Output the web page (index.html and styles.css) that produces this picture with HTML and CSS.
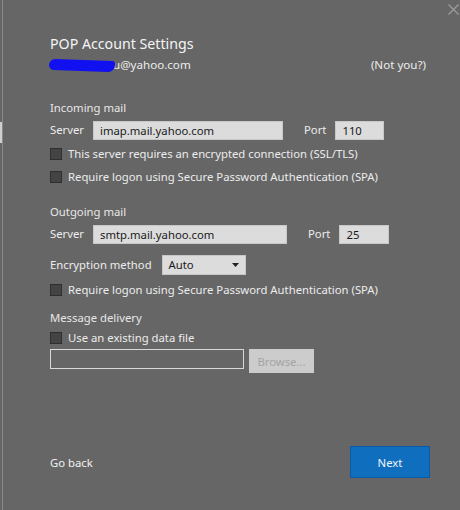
FILE: index.html
```html
<!DOCTYPE html>
<html>
<head>
<meta charset="utf-8">
<link rel="stylesheet" href="styles.css">
</head>
<body>
<div class="edge"></div>
<div class="thumb"></div>
<div class="close">
  <svg width="11" height="11" viewBox="0 0 11 11"><path d="M0.5 0.5 L10.5 10.5 M10.5 0.5 L0.5 10.5" stroke="#9a9a9a" stroke-width="1.4"/></svg>
</div>
<div class="dialog">
  <div class="title">POP Account Settings</div>
  <div class="account">
    <span class="email"><span class="scribble"></span>u@yahoo.com</span>
    <span class="notyou">(Not you?)</span>
  </div>

  <div class="section first">Incoming mail</div>
  <div class="row server">
    <span class="lbl">Server</span>
    <span class="field in-server">imap.mail.yahoo.com</span>
    <span class="lbl port-lbl">Port</span>
    <span class="field in-port">110</span>
  </div>
  <div class="check c1"><span class="box"></span>This server requires an encrypted connection (SSL/TLS)</div>
  <div class="check c2"><span class="box"></span>Require logon using Secure Password Authentication (SPA)</div>

  <div class="section out">Outgoing mail</div>
  <div class="row server">
    <span class="lbl">Server</span>
    <span class="field out-server">smtp.mail.yahoo.com</span>
    <span class="lbl port-lbl2">Port</span>
    <span class="field out-port">25</span>
  </div>
  <div class="row enc">
    <span class="lbl">Encryption method</span>
    <span class="select">Auto<svg class="arrow" width="7" height="4" viewBox="0 0 7 4"><path d="M0 0 H7 L3.5 4 Z" fill="#222"/></svg></span>
  </div>
  <div class="check c3"><span class="box"></span>Require logon using Secure Password Authentication (SPA)</div>

  <div class="section del">Message delivery</div>
  <div class="check c4"><span class="box"></span>Use an existing data file</div>
  <div class="row file">
    <span class="filebox"></span>
    <span class="browse">Browse...</span>
  </div>

  <div class="footer">
    <span class="goback">Go back</span>
    <span class="next">Next</span>
  </div>
</div>
</body>
</html>
```
FILE: styles.css
```css
html, body {
  margin: 0;
  padding: 0;
}
body {
  width: 460px;
  height: 510px;
  background: #666666;
  font-family: "Noto Sans", "Open Sans", "DejaVu Sans", sans-serif;
  font-size: 11.3px;
  color: #ececec;
  position: relative;
  overflow: hidden;
}
.edge {
  position: absolute;
  left: 2px;
  top: 0;
  bottom: 0;
  width: 1px;
  background: #8a8a8a;
}
.thumb {
  position: absolute;
  left: 0;
  top: 122px;
  width: 2px;
  height: 21px;
  background: #cfcfcf;
}
.close {
  position: absolute;
  left: 448px;
  top: 4px;
  width: 11px;
  height: 11px;
  display: flex;
}
.dialog {
  display: flex;
  flex-direction: column;
  padding: 33px 34px 0 50px;
}
.title {
  font-size: 14.2px;
  line-height: 22px;
  height: 22px;
  color: #f4f4f4;
}
.account {
  display: flex;
  justify-content: space-between;
  margin-top: 1px;
  line-height: 18px;
  height: 18px;
  font-size: 11.6px;
}
.email {
  position: relative;
  padding-left: 58px;
  margin-left: 5px;
}
.scribble {
  position: absolute;
  left: -6px;
  top: 4px;
  width: 66px;
  height: 11px;
  background: #1010f0;
  border-radius: 6px 3px 7px 5px;
  transform: rotate(2deg);
}
.notyou {
  margin-right: 0;
}
.section {
  line-height: 18px;
  height: 18px;
  color: #e6e6e6;
}
.first { margin-top: 25px; }
.out { margin-top: 17px; }
.del { margin-top: 10px; }
.row {
  display: flex;
  align-items: center;
}
.server {
  height: 20px;
  margin-top: 3px;
}
.lbl {
  line-height: 18px;
}
.field {
  display: flex;
  align-items: center;
  height: 19px;
  background: #dcdcdc;
  border: 1px solid #c8c8c8;
  box-sizing: border-box;
  color: #1a1a1a;
  padding-left: 6px;
}
.in-server { margin-left: 9px; width: 190px; }
.port-lbl { margin-left: 21px; }
.in-port { margin-left: 9px; width: 49px; }
.out-server { margin-left: 9px; width: 194px; }
.port-lbl2 { margin-left: 21px; }
.out-port { margin-left: 9px; width: 50px; }
.check {
  display: flex;
  align-items: center;
  height: 18px;
  line-height: 18px;
}
.box {
  width: 12px;
  height: 12px;
  box-sizing: border-box;
  background: #444444;
  border: 1px solid #2f2f2f;
  margin-right: 6px;
  flex: none;
}
.c1 { margin-top: 5px; }
.c2 { margin-top: 5px; }
.c3 { margin-top: 6px; }
.c4 { margin-top: 2px; }
.enc {
  margin-top: 10px;
  height: 21px;
}
.select {
  display: flex;
  align-items: center;
  justify-content: space-between;
  margin-left: 10px;
  width: 84px;
  height: 20px;
  box-sizing: border-box;
  background: #dcdcdc;
  border: 1px solid #c8c8c8;
  color: #1a1a1a;
  padding: 0 6px 0 6px;
}
.arrow { margin-top: 1px; }
.file {
  margin-top: 2px;
  align-items: flex-start;
  height: 25px;
}
.filebox {
  width: 194px;
  height: 20px;
  box-sizing: border-box;
  border: 1px solid #d8d8d8;
}
.browse {
  margin-left: 5px;
  width: 65px;
  height: 24px;
  box-sizing: border-box;
  background: #cccccc;
  color: #a4a4a4;
  display: flex;
  align-items: center;
  justify-content: center;
}
.footer {
  display: flex;
  justify-content: space-between;
  align-items: center;
  margin-top: 72px;
  padding-right: 0;
}
.goback {
  color: #f2f2f2;
}
.next {
  width: 80px;
  height: 32px;
  box-sizing: border-box;
  background: #106ebe;
  border: 1px solid #0a5aa6;
  color: #f0f6fc;
  display: flex;
  align-items: center;
  justify-content: center;
  margin-right: -4px;
}
```
